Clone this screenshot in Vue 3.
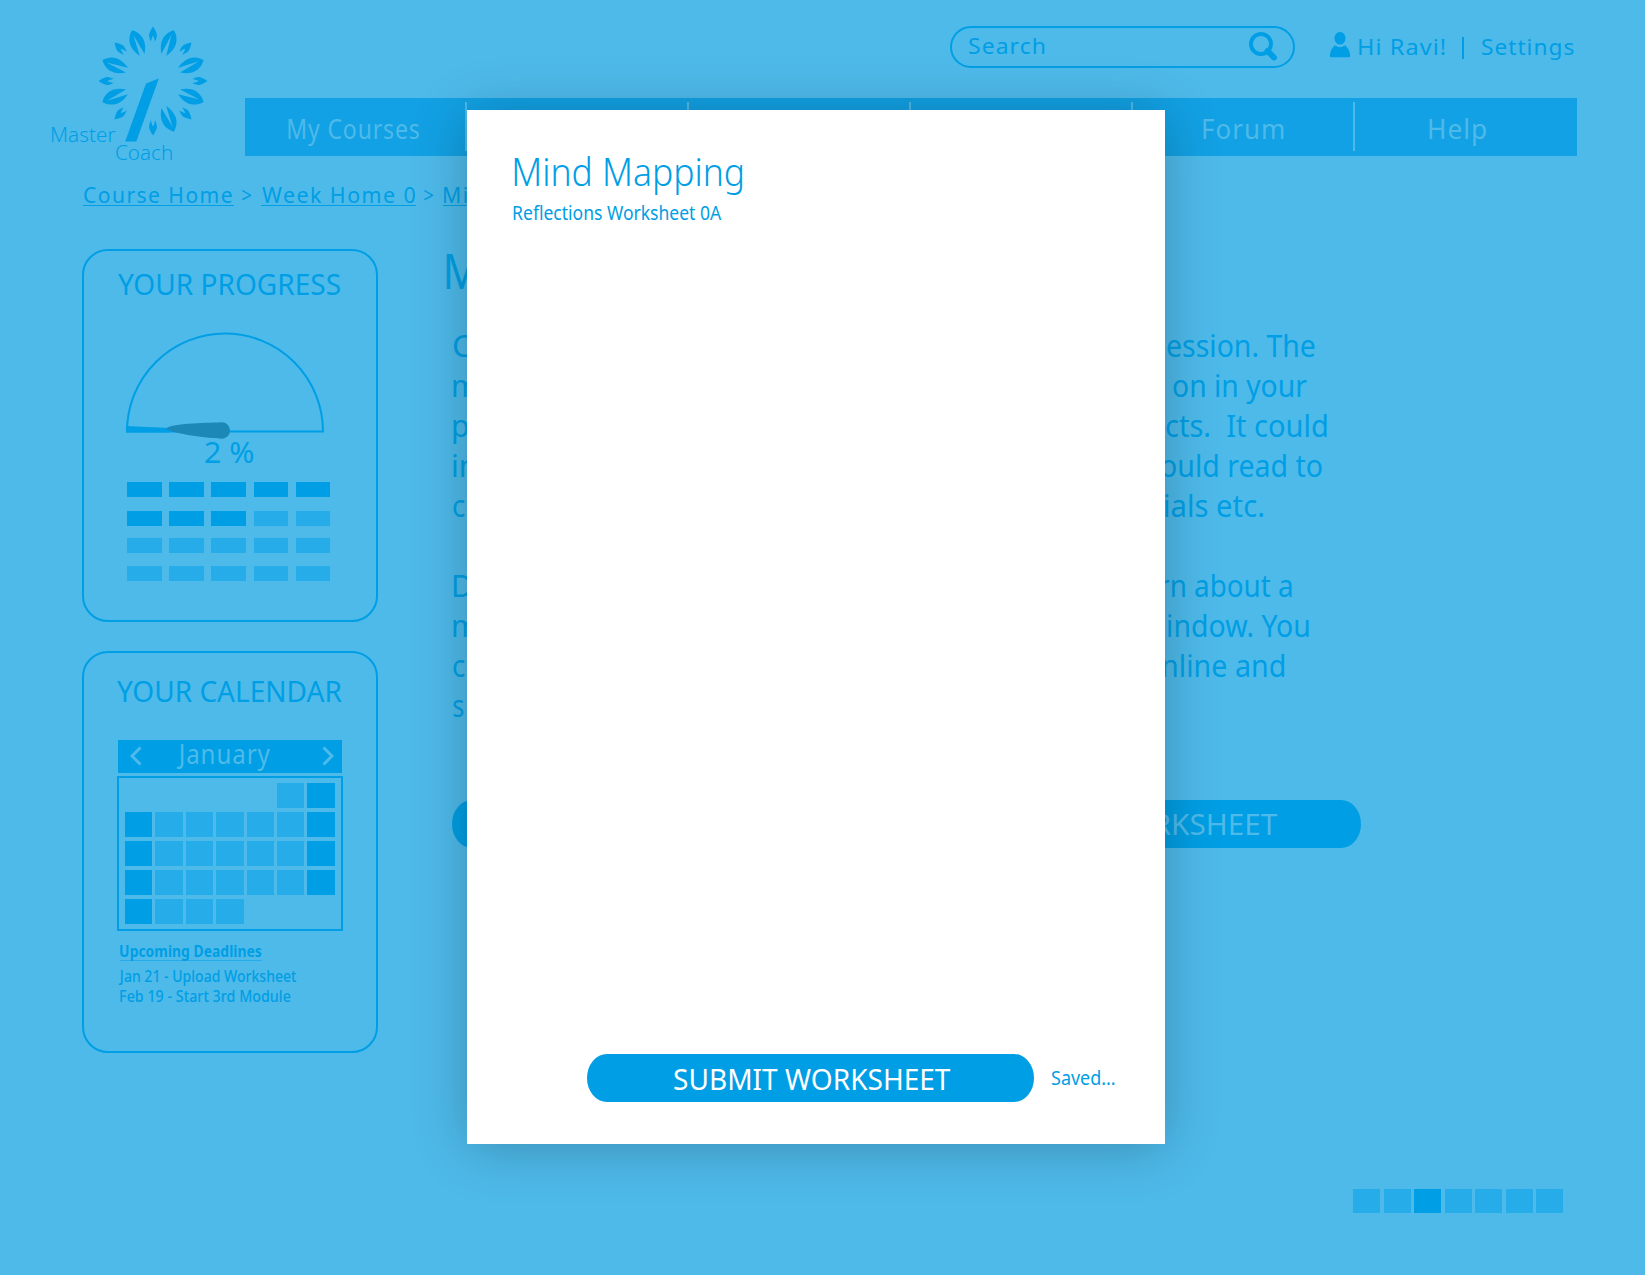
<script setup>
const canvas = document.createElement('canvas').getContext('2d')

// Stretches a line of text so that its drawn glyphs span exactly the given width.
function fit(el, { value }) {
  const style = getComputedStyle(el)
  canvas.font = `${style.fontWeight} ${style.fontSize} ${style.fontFamily}`
  canvas.letterSpacing = style.letterSpacing === 'normal' ? '0px' : style.letterSpacing
  const m = canvas.measureText(el.textContent)
  const ink = m.actualBoundingBoxLeft + m.actualBoundingBoxRight
  const scale = value / ink
  el.style.width = `${value}px`
  el.style.transform = `translateX(${m.actualBoundingBoxLeft * scale}px) scaleX(${scale})`
}
const vFit = { mounted: fit }

const bigLeaves = [22.5, 67.5, 112.5, 157.5, 247.5, 292.5, 337.5]
const smallLeaves = [0, 45, 90, 135, 180, 225, 270, 315]

const navItems = [
  { label: 'My Courses', width: 131 },
  {},
  {},
  {},
  { label: 'Forum', width: 81 },
  { label: 'Help', width: 57.5 },
]

const progress = [5, 3, 0, 0]

// Range of filled days per week; the first and last columns are the weekend.
const weeks = [[5, 6], [0, 6], [0, 6], [0, 6], [0, 3]]
const dayClass = (week, day) => ({
  tile: day >= week[0] && day <= week[1],
  strong: day === 0 || day === 6,
})

const lines = [
  { start: 'C', sw: 19, end: 'ession. The', ew: 148 },
  { start: 'm', sw: 24, end: 'on in your', ew: 133.5, right: 8.5 },
  { start: 'p', sw: 15, end: 'cts.  It could', ew: 160.5, right: -11.5 },
  { start: 'in', sw: 23, end: 'ould read to', ew: 161, right: -7.5 },
  { start: 'c', sw: 12, end: 'ials etc.', ew: 98, right: 51.5 },
  {},
  { start: 'D', sw: 19, end: 'rn about a', ew: 132, right: 23 },
  { start: 'm', sw: 24, end: 'indow. You', ew: 140.5, right: 6.5 },
  { start: 'c', sw: 12, end: 'nline and', ew: 121, right: 30.5 },
  { start: 's', sw: 11 },
]
</script>

<template>
  <div class="page">
    <header class="top">
      <div class="logo">
        <svg class="emblem" width="112" height="118" viewBox="-56 -56 112 118">
          <path
            v-for="a in smallLeaves" :key="'s' + a" :transform="`rotate(${a})`"
            d="M0-54.500C-3-50-4.200-47-3.900-45-3.600-43-2.900-41-2-39.200-1.600-41.500-1-43.800 0-45.600 1-43.800 1.600-41.500 2-39.200 2.900-41 3.600-43 3.900-45 4.200-47 3-50 0-54.500Z"
          />
          <path
            v-for="a in bigLeaves" :key="'b' + a" :transform="`rotate(${a})`"
            d="M0-54.800C-8.800-48-9.200-38-2.600-28.200L-.6-50 2.600-28.200C9.200-38 8.800-48 0-54.800Z"
          />
          <path d="M-7 2.600 5.800-2.600-16.700 60.500H-27.800Z" />
        </svg>
        <span v-fit="63.500" class="t master">Master</span>
        <span v-fit="56" class="t coach">Coach</span>
      </div>
      <div class="top-right">
        <div class="utility">
          <div class="search">
            <span v-fit="76" class="t">Search</span>
            <svg width="30" height="31" viewBox="0 0 30 31">
              <circle cx="13" cy="13" r="10" fill="none" stroke="#009ee4" stroke-width="4" />
              <path d="M19.500 20 26 26.500" fill="none" stroke="#009ee4" stroke-width="6" stroke-linecap="round" />
            </svg>
          </div>
          <div class="user">
            <svg width="22" height="26" viewBox="0 0 22 26">
              <ellipse cx="11" cy="6.300" rx="5.500" ry="6.300" />
              <path d="M.8 24Q1.500 16.500 6 13.200 11 17.500 16 13.200 20.500 16.500 21.200 24 21 25.300 19.500 25.300H2.500Q1 25.300.8 24Z" />
            </svg>
            <span v-fit="86" class="t">Hi Ravi!</span>
            <span class="bar"></span>
            <span v-fit="91.500" class="t">Settings</span>
          </div>
        </div>
        <nav class="nav">
          <div v-for="(item, i) in navItems" :key="i" class="nav-item">
            <span v-if="item.label" v-fit="item.width" class="t">{{ item.label }}</span>
          </div>
        </nav>
      </div>
    </header>

    <div class="crumbs">
      <a><span v-fit="148" class="t">Course Home</span></a>
      <span v-fit="9" class="t">&gt;</span>
      <a><span v-fit="153" class="t">Week Home 0</span></a>
      <span v-fit="9" class="t">&gt;</span>
      <a class="current"><span v-fit="23.500" class="t">Mi</span></a>
    </div>

    <main class="main">
      <aside class="side">
        <section class="card progress">
          <h2 v-fit="222" class="t">YOUR PROGRESS</h2>
          <svg class="gauge" width="200" height="110" viewBox="0 0 200 110">
            <path d="M2 99.500A98 98 0 0 1 198 99.500Z" fill="none" stroke="#009ee4" stroke-width="2" />
            <path d="M1 94 45 96 45 100.500H1Z" fill="#009ee4" />
            <path d="M41.500 96.500C46 91.500 78 91 97 90.300A8 8.200 0 0 1 97 106.700C85 106.500 45 101.500 41.500 96.500Z" fill="#1b88b8" />
          </svg>
          <div v-fit="49" class="t percent">2 %</div>
          <div class="bars">
            <div v-for="(done, r) in progress" :key="r" class="bar-row">
              <i v-for="n in 5" :key="n" class="tile" :class="{ strong: n <= done }"></i>
            </div>
          </div>
        </section>

        <section class="card calendar">
          <h2 v-fit="224.500" class="t">YOUR CALENDAR</h2>
          <div class="month">
            <svg width="12" height="20" viewBox="0 0 12 20"><path d="M10.500 1.500 2 10 10.500 18.500" /></svg>
            <span v-fit="94" class="t">January</span>
            <svg width="12" height="20" viewBox="0 0 12 20"><path d="M1.500 1.500 10 10 1.500 18.500" /></svg>
          </div>
          <div class="days">
            <template v-for="(week, w) in weeks" :key="w">
              <i v-for="d in 7" :key="d" :class="dayClass(week, d - 1)"></i>
            </template>
          </div>
          <div class="deadlines">
            <a><span v-fit="142" class="t">Upcoming Deadlines</span></a>
            <span v-fit="178.500" class="t jan">Jan 21 - Upload Worksheet</span>
            <span v-fit="171" class="t">Feb 19 - Start 3rd Module</span>
          </div>
        </section>
      </aside>

      <article class="content">
        <h1 v-fit="31" class="t">M</h1>
        <div class="copy">
          <div v-for="(l, i) in lines" :key="i" class="line">
            <span v-if="l.start" v-fit="l.sw" class="t">{{ l.start }}</span>
            <span v-if="l.end" v-fit="l.ew" class="t" :style="{ marginRight: (l.right || 0) + 'px' }">{{ l.end }}</span>
          </div>
        </div>
        <div class="button wide"><span v-fit="176" class="t">WORKSHEET</span></div>
        <div class="pager">
          <i v-for="n in 7" :key="n" class="tile" :class="{ strong: n === 3 }"></i>
        </div>
      </article>
    </main>

    <div class="modal">
      <h2 v-fit="228.500" class="t">Mind Mapping</h2>
      <p v-fit="208.500" class="t">Reflections Worksheet 0A</p>
      <div class="modal-foot">
        <div class="button"><span v-fit="277" class="t">SUBMIT WORKSHEET</span></div>
        <span v-fit="62.500" class="t saved">Saved...</span>
      </div>
    </div>
  </div>
</template>

<style>
body {
  margin: 0;
  background: #fff;
}
</style>

<style scoped>
.page {
  position: relative;
  box-sizing: border-box;
  width: 1644.5px;
  height: 1275px;
  overflow: hidden;
  background: #4ebaea;
  color: #009ee4;
  font-family: "Noto Sans", "Open Sans", sans-serif;
}
.t {
  display: block;
  flex: none;
  margin: 0;
  line-height: 1;
  white-space: pre;
  transform-origin: 0 0;
  font-weight: 400;
}
.tile {
  background: #26ace8;
}
.tile.strong {
  background: #009ee4;
}

.top {
  display: flex;
  height: 156px;
}
.logo {
  position: relative;
  flex: none;
  width: 245px;
}
.emblem {
  display: block;
  margin: 25px 0 0 96.5px;
  fill: #009ee4;
}
.logo .t {
  position: absolute;
  font-size: 20.5px;
  font-weight: 300;
}
.logo .master {
  left: 52px;
  top: 124.4px;
}
.logo .coach {
  left: 116px;
  top: 142px;
}
.top-right {
  flex: none;
  width: 1331.5px;
}
.utility {
  display: flex;
  justify-content: flex-end;
  height: 98px;
}
.search {
  box-sizing: border-box;
  display: flex;
  justify-content: space-between;
  width: 345px;
  height: 42px;
  margin: 26px 34.5px 0 0;
  padding: 4px 15px 0 17.5px;
  border: 2px solid #009ee4;
  border-radius: 21px;
}
.search .t,
.user .t {
  font-size: 22.5px;
  letter-spacing: 1px;
}
.search .t {
  margin-top: 3px;
}
.search svg {
  margin-top: -1px;
}
.user {
  display: flex;
  margin: 36px 3px 0 0;
}
.user svg {
  margin: -4px 8px 0 0;
  fill: #009ee4;
}
.user .bar {
  width: 2px;
  height: 22px;
  margin: 1px 18px 0 17px;
  background: #009ee4;
}
.nav {
  display: flex;
  height: 58px;
  background: #12a1e4;
}
.nav-item {
  box-sizing: border-box;
  flex: none;
  display: flex;
  justify-content: center;
  width: 222.1px;
  height: 49px;
  margin-top: 4px;
  padding-top: 12.5px;
  border-right: 2px solid #4ebaea;
}
.nav-item:last-child {
  width: 221px;
  padding-right: 16px;
  border-right: 0;
}
.nav-item:first-child {
  padding-right: 3px;
}
.nav-item .t {
  font-size: 27px;
  font-weight: 400;
  letter-spacing: 1px;
  color: #4ebaea;
}

.crumbs {
  display: flex;
  gap: 9px;
  height: 65px;
  padding: 28px 0 0 83px;
}
.crumbs .t {
  font-size: 22.5px;
  letter-spacing: 1.5px;
}
.crumbs > .t {
  position: relative;
  left: -1px;
}
.crumbs a {
  width: 149.5px;
  height: 21px;
  padding-left: 1px;
  border-bottom: 1px solid #009ee4;
}
.crumbs a:nth-of-type(2) {
  width: 154px;
}
.crumbs .current {
  width: 120px;
}

.main {
  display: flex;
}
.side {
  flex: none;
  width: 296px;
  margin-left: 82px;
}
.card {
  box-sizing: border-box;
  border: 2px solid #009ee4;
  border-radius: 26px;
}
.card h2 {
  font-size: 29.5px;
}
.progress {
  height: 373px;
  padding: 18px 34px 0;
}
.gauge {
  display: block;
  margin: 33px 0 0 7px;
}
.percent {
  margin: -5px 0 0 86.5px;
  font-size: 29.5px;
}
.bars {
  margin: 15.5px 0 0 9px;
}
.bar-row {
  display: flex;
  gap: 7.6px;
}
.bar-row + .bar-row {
  margin-top: 12.5px;
}
.bar-row:nth-child(2) {
  margin-top: 14px;
}
.bar-row i {
  width: 34.6px;
  height: 15px;
}
.calendar {
  height: 402px;
  margin-top: 29px;
  padding: 22.5px 33px 0;
}
.month {
  display: flex;
  align-items: flex-start;
  width: 204px;
  height: 33px;
  margin: 35px 0 0 1px;
  padding: 0 8px 0 12px;
  background: #009ee4;
}
.month .t {
  margin: 0 52px 0 34px;
  font-size: 27px;
  font-weight: 400;
  letter-spacing: 1px;
  color: #4ebaea;
}
.month svg {
  margin-top: 6px;
  fill: none;
  stroke: #4ebaea;
  stroke-width: 3;
}
.days {
  display: grid;
  grid-template-columns: repeat(7, 27.4px);
  grid-auto-rows: 25px;
  gap: 4px 3px;
  width: 211px;
  height: 141px;
  margin-top: 3px;
  padding: 5px 5px 5px 6px;
  border: 2px solid #009ee4;
}
.deadlines {
  margin: 13px 0 0 2.5px;
}
.deadlines .t {
  font-size: 15.5px;
  font-weight: 500;
  margin-top: 4.5px;
}
.deadlines a {
  display: block;
  width: 142px;
  height: 16px;
  margin-bottom: 7.5px;
  border-bottom: 1px solid rgba(0, 158, 228, 0.5);
}
.deadlines a .t {
  margin: 0;
  font-weight: 700;
}
.deadlines .jan {
  margin-left: -1.5px;
}

.content {
  flex: none;
  width: 1117px;
  margin-left: 68px;
}
.content h1 {
  margin-top: -3px;
  font-size: 49px;
}
.copy {
  width: 861.5px;
  margin: 36px 0 0 7px;
}
.line {
  display: flex;
  justify-content: space-between;
  height: 40px;
}
.line .t {
  font-size: 30px;
}
.button {
  box-sizing: border-box;
  height: 48px;
  border-radius: 20px / 24px;
  background: #009ee4;
}
.button .t {
  font-size: 29.5px;
}
.wide {
  display: flex;
  justify-content: flex-end;
  width: 908.5px;
  margin: 69px 0 0 6px;
  padding: 8.5px 83px 0 0;
  color: #4ebaea;
}
.pager {
  display: flex;
  justify-content: space-between;
  width: 210.5px;
  margin: 340.5px 0 0 907px;
}
.pager i {
  width: 27.3px;
  height: 24px;
}

.modal {
  position: absolute;
  box-sizing: border-box;
  left: 467px;
  top: 110px;
  width: 697.5px;
  height: 1034px;
  padding: 42px 0 0 46px;
  background: #fff;
  box-shadow: 0 4px 52px rgba(0, 0, 0, 0.24);
}
.modal h2 {
  margin-left: 1px;
  font-size: 38px;
  font-weight: 300;
}
.modal p {
  margin-top: 12.5px;
  font-size: 19.8px;
}
.modal-foot {
  display: flex;
  margin: 832px 0 0 74px;
}
.modal-foot .button {
  width: 446.5px;
  padding: 9.5px 0 0 86.5px;
  color: #fff;
}
.saved {
  margin: 14px 0 0 18.5px;
  font-size: 19.8px;
}
</style>
